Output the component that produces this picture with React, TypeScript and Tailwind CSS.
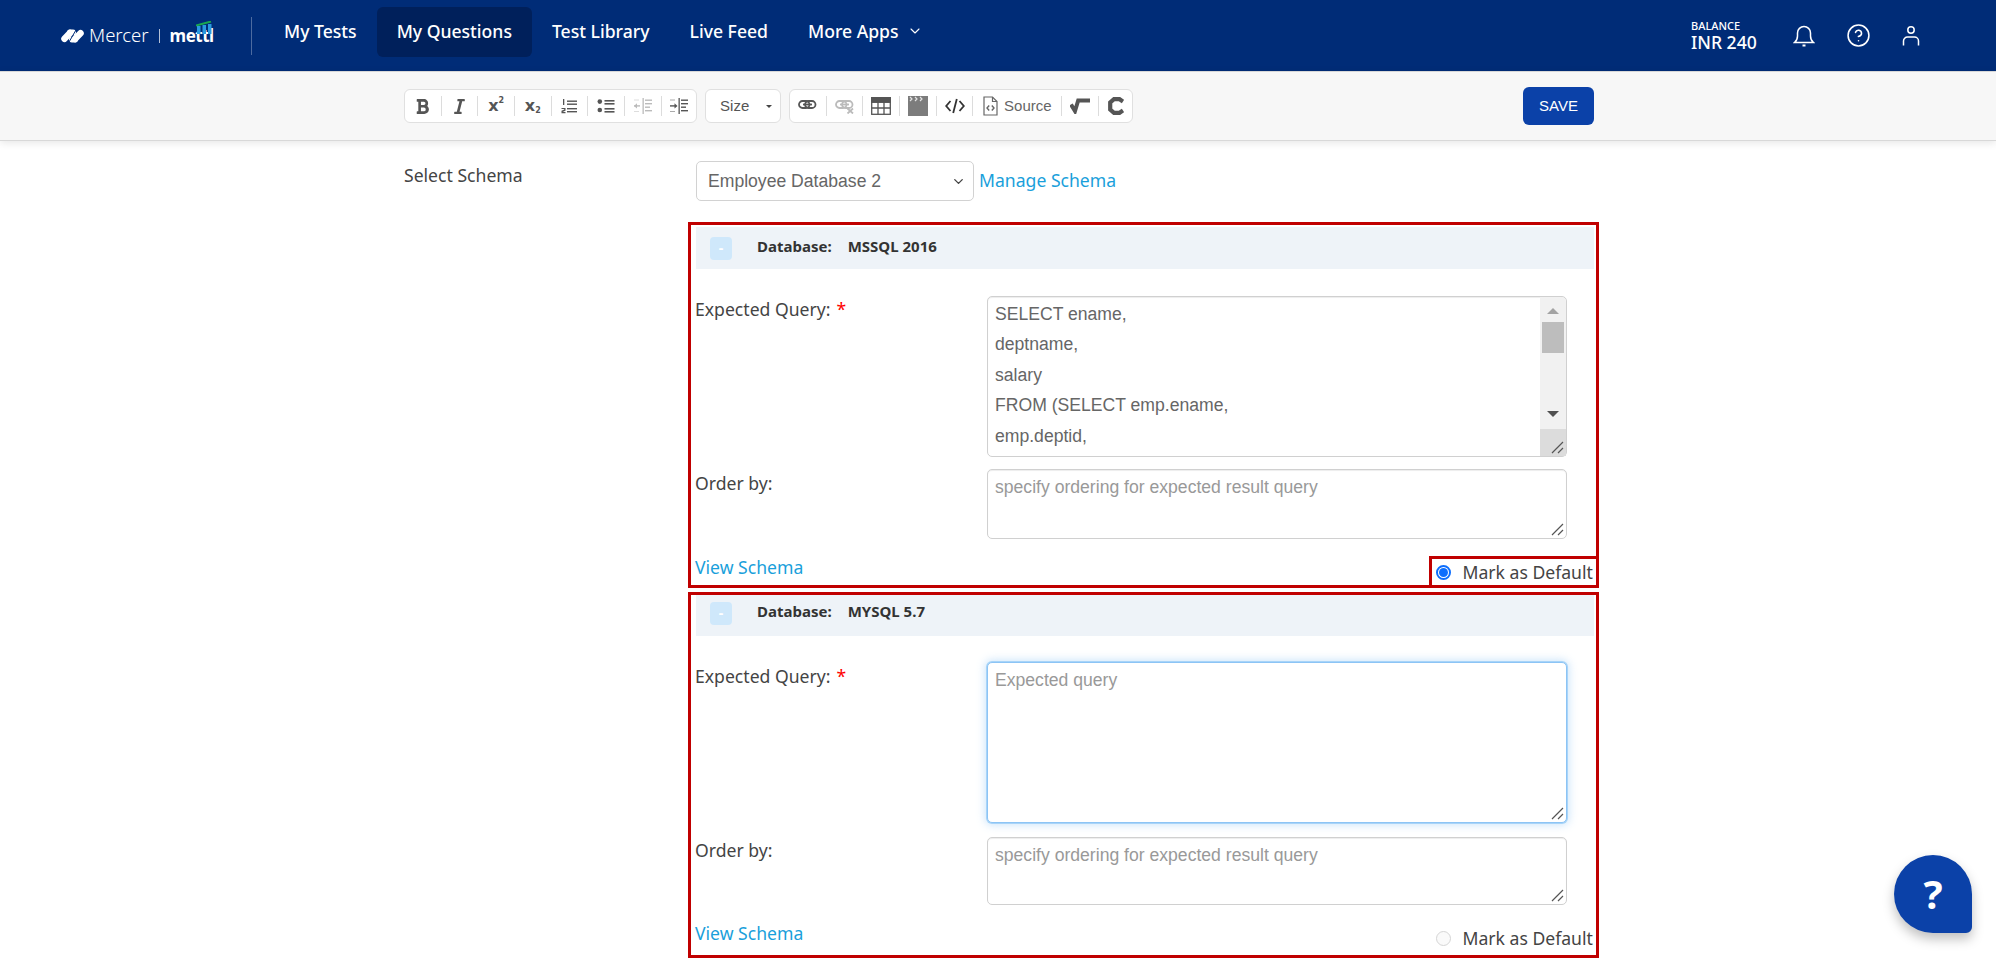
import { ReactNode } from 'react';
import { FaBold, FaItalic } from 'react-icons/fa';
import { ChevronDown, CircleHelp } from 'lucide-react';

const SQL = 'SELECT ename,\ndeptname,\nsalary\nFROM (SELECT emp.ename,\nemp.deptid,';

function Sep() {
  return <div className="h-5 w-px shrink-0 bg-[#dcdcdc]" />;
}

function Tool({ children, w = 'w-[35.67px]' }: { children: ReactNode; w?: string }) {
  return <div className={`flex h-full shrink-0 items-center justify-center ${w}`}>{children}</div>;
}

function Script({ sub }: { sub?: boolean }) {
  return (
    <span className="flex items-baseline font-['DejaVu_Sans',sans-serif] font-bold text-[#555]">
      <span className="text-[16px] leading-none">x</span>
      <span className={`text-[8px] leading-none ${sub ? 'translate-y-[2px]' : '-translate-y-[8px]'}`}>2</span>
    </span>
  );
}

function OrderedIcon() {
  return (
    <svg width="16" height="16" viewBox="0 0 16 16" fill="#555">
      <rect x="6" y="2.5" width="10" height="1.4" />
      <rect x="6" y="5.5" width="10" height="1.4" />
      <rect x="6" y="10" width="10" height="1.4" />
      <rect x="6" y="13" width="10" height="1.4" />
      <rect x="2" y="1" width="1.3" height="6" />
      <path d="M0.5 10h4v2.8l-3 1.2h3v1.2H0.5v-2.4l2.8-1.4v-.5H0.5z" />
    </svg>
  );
}

function BulletIcon() {
  return (
    <svg width="18" height="16" viewBox="0 0 18 16" fill="#555">
      <circle cx="2.8" cy="3.6" r="2.3" />
      <circle cx="2.8" cy="12" r="2.3" />
      <rect x="7.5" y="2" width="10" height="1.6" />
      <rect x="7.5" y="5" width="10" height="1.6" />
      <rect x="7.5" y="10" width="10" height="1.6" />
      <rect x="7.5" y="13" width="10" height="1.6" />
    </svg>
  );
}

function IndentIcon({ out }: { out?: boolean }) {
  return (
    <svg width="18" height="16" viewBox="0 0 18 16" fill={out ? '#bbb' : '#555'}>
      <rect x="0" y="7.2" width="6" height="1.4" />
      <path d={out ? 'M0 7.9l3-2.6v5.2z' : 'M7.5 7.9l-3-2.6v5.2z'} />
      <rect x="8.5" y="0" width="1.3" height="16" />
      <rect x="11" y="1.5" width="7" height="1.4" />
      <rect x="11" y="5" width="7" height="1.4" />
      <rect x="11" y="8.5" width="5" height="1.4" />
      <rect x="11" y="12" width="7" height="1.4" />
      <rect x="0" y="1.5" width="5" height="1" opacity=".5" />
      <rect x="0" y="13" width="5" height="1" opacity=".5" />
    </svg>
  );
}

function LinkIcon({ off }: { off?: boolean }) {
  return (
    <svg width="19" height="16" viewBox="0 0 19 16" fill="none" stroke={off ? '#bbb' : '#555'} strokeWidth="1.8">
      <rect x="1" y="3" width="10.5" height="7" rx="3.5" />
      <rect x="7" y="3" width="10.5" height="7" rx="3.5" />
      <path d="M5 6.5h9" />
      {off && <path d="M12.5 10.5l5.5 5M18 10.5l-5.5 5" strokeWidth="1.8" />}
    </svg>
  );
}

function TableIcon() {
  return (
    <svg width="20" height="18" viewBox="0 0 20 18" fill="none" stroke="#555" strokeWidth="1.3">
      <rect x="0.7" y="0.7" width="18.6" height="16.6" />
      <rect x="0.7" y="0.7" width="18.6" height="4.6" fill="#555" />
      <path d="M0.7 11h18.6M7 5v12.3M13 5v12.3" />
    </svg>
  );
}

function ClapperIcon() {
  return (
    <svg width="20" height="20" viewBox="0 0 20 20">
      <rect x="0" y="0" width="20" height="20" fill="#7c7c7c" />
      <path d="M2 1l2 2-2 2M7 1l2 2-2 2M12 1l2 2-2 2" fill="none" stroke="#e4e4e4" strokeWidth="1.2" />
    </svg>
  );
}

function CodeIcon() {
  return (
    <svg width="20" height="16" viewBox="0 0 20 16" fill="none" stroke="#333" strokeWidth="1.8">
      <path d="M5.5 3L1.2 8l4.3 5M14.5 3l4.3 5-4.3 5M11.8 1L8.2 15" />
    </svg>
  );
}

function SourceIcon() {
  return (
    <svg width="15" height="20" viewBox="0 0 15 20" fill="none" stroke="#666" strokeWidth="1.2">
      <path d="M1 1h8.5L14 5.5V19H1z" />
      <path d="M9.5 1v4.5H14" />
      <path d="M6.2 9.5l-2.2 2.5 2.2 2.5M8.8 9.5l2.2 2.5-2.2 2.5" strokeWidth="1.4" />
    </svg>
  );
}

function RootIcon() {
  return (
    <svg width="20" height="16" viewBox="0 0 20 16" fill="none" stroke="#555" strokeWidth="4">
      <path d="M1 6.5L5 13 8.2 2.5H20" />
    </svg>
  );
}

function CIcon() {
  return (
    <svg width="16" height="18" viewBox="0 0 16 18" fill="none" stroke="#555" strokeWidth="4.2">
      <path d="M15 4.5L11.5 2.2H6L2.2 5.5v7L6 15.8h5.5L15 13.5" />
    </svg>
  );
}

function Toolbar() {
  return (
    <div className="flex w-[1190px] items-center justify-between">
      <div className="flex items-center gap-2">
        <div className="flex h-[34px] items-center rounded-md border border-[#e0e0e0] bg-white">
          <Tool><FaBold size={17} color="#555" /></Tool><Sep />
          <Tool><FaItalic size={17} color="#555" /></Tool><Sep />
          <Tool><Script /></Tool><Sep />
          <Tool><Script sub /></Tool><Sep />
          <Tool><OrderedIcon /></Tool><Sep />
          <Tool><BulletIcon /></Tool><Sep />
          <Tool><IndentIcon out /></Tool><Sep />
          <Tool w="w-[34.5px]"><IndentIcon /></Tool>
        </div>
        <div className="flex h-[34px] w-[76px] items-center justify-between rounded-md border border-[#e0e0e0] bg-white pl-3.5 pr-2 font-['Liberation_Sans',sans-serif] text-[15px] text-[#555]">
          Size
          <span className="h-0 w-0 border-x-[3px] border-t-[3px] border-x-transparent border-t-[#444]" />
        </div>
        <div className="flex h-[34px] items-center rounded-md border border-[#e0e0e0] bg-white">
          <Tool><LinkIcon /></Tool><Sep />
          <Tool><LinkIcon off /></Tool><Sep />
          <Tool><TableIcon /></Tool><Sep />
          <Tool><ClapperIcon /></Tool><Sep />
          <Tool><CodeIcon /></Tool><Sep />
          <Tool w="w-[88px]">
            <div className="flex items-center gap-[6px] font-['Liberation_Sans',sans-serif] text-[15px] text-[#666]">
              <SourceIcon />
              Source
            </div>
          </Tool>
          <Sep />
          <Tool><RootIcon /></Tool><Sep />
          <Tool w="w-[33px]"><CIcon /></Tool>
        </div>
      </div>
      <button className="h-[38px] w-[71px] rounded-md bg-[#0b41a8] font-['Liberation_Sans',sans-serif] text-[15px] text-white">SAVE</button>
    </div>
  );
}

function Grip() {
  return (
    <svg className="absolute bottom-[3px] right-[3px]" width="13" height="13" viewBox="0 0 13 13" fill="none" stroke="#555" strokeWidth="1.2">
      <path d="M1 12L12 1M7 12l5-5" />
    </svg>
  );
}

function Area({ value, placeholder, h, focus, tall }: { value?: string; placeholder: string; h: string; focus?: boolean; tall?: boolean }) {
  return (
    <div className={`relative w-[580px] ${h}`}>
      <textarea
        readOnly
        value={value}
        placeholder={placeholder}
        className={`block h-full w-full resize-none overflow-hidden rounded-[5px] border bg-white px-[7px] font-['Liberation_Sans',sans-serif] text-[17.6px] text-[#666] outline-none placeholder:text-[#999] ${tall ? 'pb-0 pt-[2px] leading-[30.4px]' : 'py-2 leading-[18px]'} ${focus ? 'border-[#8cc4f5] shadow-[0_0_0_1px_#a8d4f8,0_0_8px_2px_rgba(140,196,245,0.45)]' : 'border-[#d0d0d0] shadow-[inset_0_1px_1px_rgba(0,0,0,0.075)]'}`}
      />
      {tall && (
        <div className="absolute bottom-px right-px top-px flex w-[26px] flex-col rounded-r-[5px] bg-[#f1f1f1]">
          <div className="mx-auto mt-[11px] h-0 w-0 border-x-[6px] border-b-[6px] border-x-transparent border-b-[#a3a3a3]" />
          <div className="mx-auto mt-[8px] h-[31px] w-[22px] bg-[#bdbdbd]" />
          <div className="mx-auto mt-[58px] h-0 w-0 border-x-[6px] border-t-[6px] border-x-transparent border-t-[#505050]" />
          <div className="mt-auto h-[27px] bg-[#dcdcdc]" />
        </div>
      )}
      <Grip />
    </div>
  );
}

function Row({ label, required, pt, children, className }: { label: string; required?: boolean; pt: string; children: ReactNode; className: string }) {
  return (
    <div className={`flex ${className}`}>
      <div className={`w-[291px] shrink-0 whitespace-nowrap text-[17.6px] leading-6 text-[#444] ${pt}`}>
        <span className="-ml-px">{label}</span>
        {required && <span className="ml-1.5 text-[#f00]">*</span>}
      </div>
      {children}
    </div>
  );
}

function DbSection({ name, first }: { name: string; first?: boolean }) {
  return (
    <section className={`flex h-[366px] flex-col border-[3px] border-[#c00000] pl-[5px] pr-[2px] ${first ? 'pt-[2px]' : ''}`}>
      <div className={`flex shrink-0 items-center bg-[#eef3f8] pl-[14px] ${first ? 'h-[42px]' : 'h-[41px] pb-[5px]'}`}>
        <button className="flex h-[23px] w-[22px] items-center justify-center rounded-[4px] bg-[#cfe8fb] text-[14px] font-bold leading-none text-white">-</button>
        <div className="mb-[3px] ml-[25px] flex gap-4 text-[15px] font-bold text-[#333]">
          <span>Database:</span>
          <span>{name}</span>
        </div>
      </div>
      <Row label="Expected Query:" required pt={first ? 'pt-px' : 'pt-[2px]'} className={first ? 'mt-[27px]' : 'mt-[26px]'}>
        {first ? <Area value={SQL} placeholder="Expected query" h="h-[161px]" tall /> : <Area placeholder="Expected query" h="h-[161px]" focus />}
      </Row>
      <Row label="Order by:" pt={first ? 'pt-[2px]' : 'pt-px'} className={first ? 'mt-[12px]' : 'mt-[14px]'}>
        <Area placeholder="specify ordering for expected result query" h={first ? 'h-[70px]' : 'h-[68px]'} />
      </Row>
      <div className={`mt-[17px] flex items-start justify-between -mr-[5px] ${first ? '-mb-[3px]' : 'mb-px'}`}>
        <a className="-ml-px -mt-px text-[17.6px] leading-6 text-[#1a9fdb]">View Schema</a>
        <label className={`flex h-8 w-[170px] items-center border-[3px] pl-[3.5px] text-[17.6px] text-[#444] ${first ? 'border-[#c00000]' : 'border-transparent'}`}>
          {first ? (
            <span className="flex h-[15px] w-[15px] items-center justify-center rounded-full border-2 border-[#0d6efd]">
              <span className="h-[9px] w-[9px] rounded-full bg-[#0d6efd]" />
            </span>
          ) : (
            <span className="h-[15px] w-[15px] rounded-full border border-[#d5d5d5] bg-[#fafafa]" />
          )}
          <span className="ml-3 whitespace-nowrap">Mark as Default</span>
        </label>
      </div>
    </section>
  );
}

export default function App() {
  return (
    <div className="relative h-screen overflow-hidden bg-white font-['Noto_Sans',sans-serif]">
      <header className="flex h-[71px] items-center bg-[#002c77] pl-[61px] text-white">
        <div className="flex w-[190px] shrink-0 items-center">
          <svg width="23" height="14" viewBox="0 0 23 14" fill="none" stroke="#fff" strokeWidth="6.5" strokeLinecap="round">
            <path d="M3.5 9.8L9 4" />
            <path d="M14 10L19.5 4.2" />
            <path d="M9 3.5h3M11 10.5h3" strokeWidth="6" />
            <path d="M8 13L15 1" stroke="#002c77" strokeWidth="1" strokeLinecap="butt" />
          </svg>
          <span className="ml-[5px] text-[18.5px] font-light leading-none">Mercer</span>
          <div className="ml-[10px] h-[14px] w-px bg-white/70" />
          <div className="relative ml-[10px] text-[17px] font-bold leading-none tracking-[-0.5px]">
            mettl
            <svg className="absolute -top-[6px] left-[26px]" width="17" height="13" viewBox="0 0 17 13">
              <path d="M0 4.5L15 0.5" stroke="#1aa84f" strokeWidth="2" />
              <rect x="1" y="5" width="3.5" height="8" fill="#2a9ae0" />
              <rect x="6.5" y="4" width="3.5" height="9" fill="#2a9ae0" />
              <rect x="12" y="3" width="3.5" height="10" fill="#2a9ae0" />
            </svg>
          </div>
        </div>
        <div className="h-[38px] w-px bg-white/30" />
        <nav className="-mt-[8px] ml-3 flex items-center text-[17.6px] font-medium">
          <a className="px-5">My Tests</a>
          <a className="flex h-[50px] items-center rounded-md bg-[#00205b] px-5">My Questions</a>
          <a className="px-5">Test Library</a>
          <a className="px-5">Live Feed</a>
          <a className="flex items-center gap-2 px-5">
            More Apps <ChevronDown size={16} strokeWidth={1.6} />
          </a>
        </nav>
        <div className="ml-auto flex items-center pr-[76px]">
          <div className="flex w-[66px] flex-col">
            <span className="text-[11px] font-medium leading-[13px]">BALANCE</span>
            <span className="text-[17.6px] font-medium leading-5">INR 240</span>
          </div>
          <div className="ml-[36px] flex items-center gap-[31px]">
            <svg width="22" height="22" viewBox="0 0 22 22" fill="none" stroke="#fff" strokeWidth="1.5">
              <path d="M1.5 17.5h19c-2-1.5-3-3-3-6.5V8a6.5 6.5 0 0 0-13 0v3c0 3.5-1 5-3 6.5z" />
              <path d="M9.5 20.5h3" strokeWidth="2" />
            </svg>
            <CircleHelp size={25} strokeWidth={1.5} />
            <svg width="18" height="20" viewBox="0 0 18 20" fill="none" stroke="#fff" strokeWidth="1.5">
              <circle cx="9" cy="4" r="3.2" />
              <path d="M1.5 19.5V15a4 4 0 0 1 4-4h7a4 4 0 0 1 4 4v4.5" />
            </svg>
          </div>
        </div>
      </header>
      <div className="flex h-[70px] items-center border-t border-b border-[#d8d8d8] bg-[#f7f7f7] pl-[404px] shadow-[0_2px_8px_rgba(0,0,0,0.1)]">
        <Toolbar />
      </div>
      <main className="flex pl-[404px]">
        <div className="w-[284px] shrink-0 pt-[22px] text-[17.6px] leading-6 text-[#444]">Select Schema</div>
        <div className="flex w-[911px] flex-col">
          <div className="mt-5 flex h-10 items-center pl-2">
            <div className="relative w-[278px]">
              <select className="h-10 w-full appearance-none rounded-[5px] border border-[#d2d2d2] bg-white pl-[11px] font-['Liberation_Sans',sans-serif] text-[17.6px] text-[#666] outline-none">
                <option>Employee Database 2</option>
              </select>
              <ChevronDown className="absolute right-[8px] top-[13px] text-[#444]" size={15} strokeWidth={2.2} />
            </div>
            <a className="ml-[5px] -mt-[2px] text-[17.6px] text-[#1a9fdb]">Manage Schema</a>
          </div>
          <div className="mt-[21px] flex flex-col gap-1">
            <DbSection name="MSSQL 2016" first />
            <DbSection name="MYSQL 5.7" />
          </div>
        </div>
      </main>
      <button className="absolute left-[1894px] top-[855px] flex h-[78px] w-[78px] items-center justify-center rounded-[39px] rounded-br-[6px] bg-[#0b41a8] text-[40px] font-bold text-white shadow-[0_6px_12px_rgba(0,0,0,0.25)]">?</button>
    </div>
  );
}
